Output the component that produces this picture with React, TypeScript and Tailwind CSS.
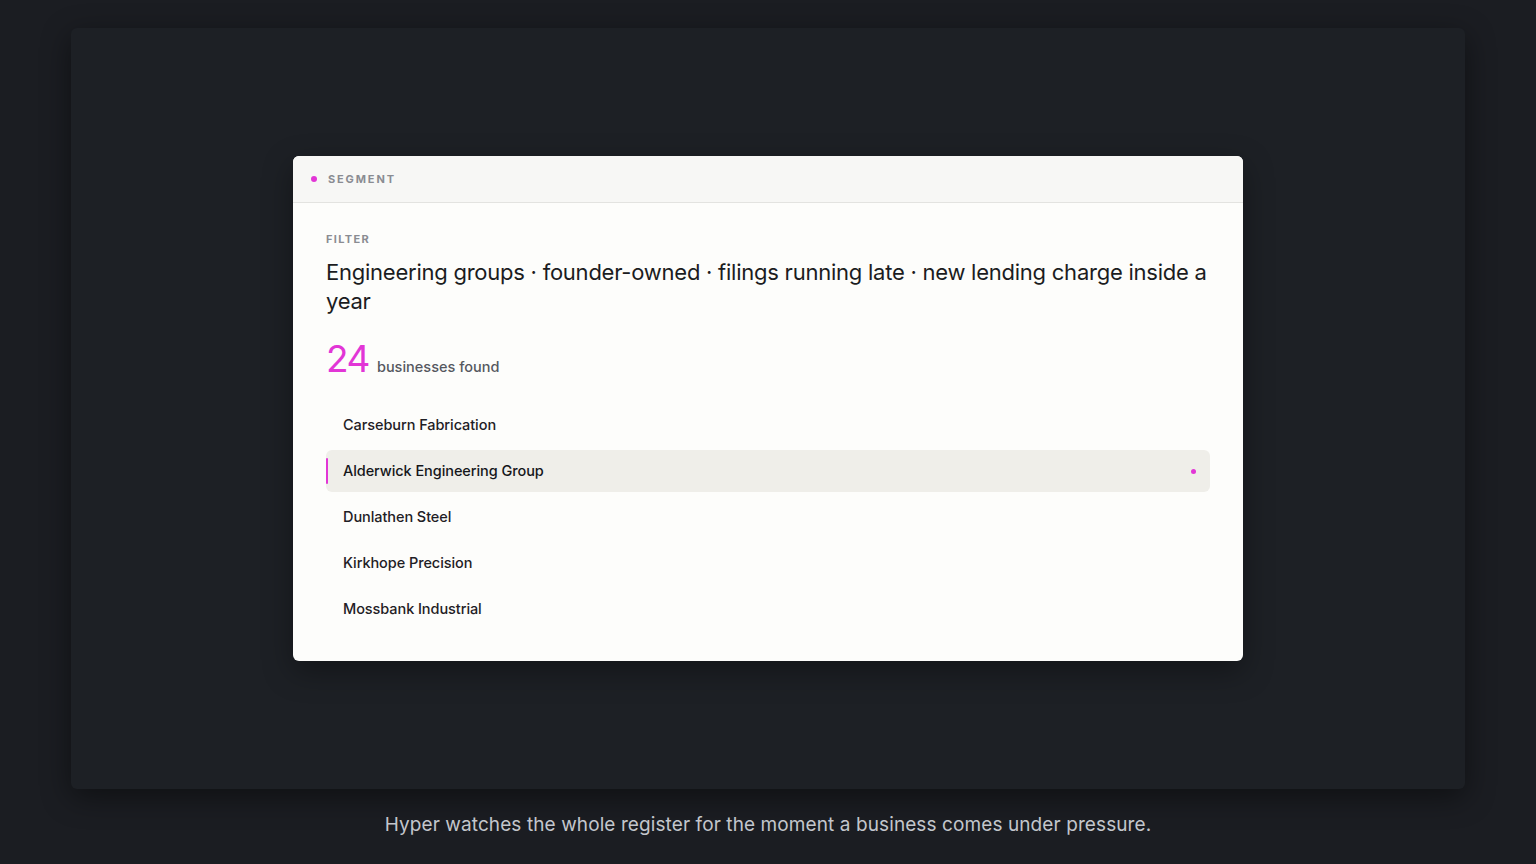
// Segment preview: a filter summary card inside a framed stage, with a caption below.
const companies = [
  "Carseburn Fabrication",
  "Alderwick Engineering Group",
  "Dunlathen Steel",
  "Kirkhope Precision",
  "Mossbank Industrial",
];

const ACTIVE = "Alderwick Engineering Group";

function SegmentCard() {
  return (
    <div className="w-[950px] overflow-hidden rounded-md bg-[#fdfdfb] shadow-[0_10px_30px_rgba(0,0,0,0.35)]">
      <div className="flex h-[47px] items-center gap-[11px] border-b border-[#e3e3e0] bg-[#f7f7f5] px-[18px]">
        <span className="h-[6px] w-[6px] rounded-full bg-[#e236d6]" />
        <span className="text-[11px] font-bold tracking-[0.17em] text-[#8a8c92]">
          SEGMENT
        </span>
      </div>
      <div className="px-[33px] pt-[28px] pb-[31px]">
        <div className="text-[11px] font-bold tracking-[0.12em] text-[#8a8c92]">
          FILTER
        </div>
        <h2 className="mt-[11px] text-[22px] leading-[29px] font-normal tracking-[-0.011em] text-[#1b1c21]">
          Engineering groups · founder-owned · filings running late · new lending charge inside a year
        </h2>
        <div className="mt-[24px] flex items-baseline gap-[8px]">
          <span className="text-[37px] leading-none font-normal tracking-[-0.04em] text-[#e236d6]">
            24
          </span>
          <span className="text-[14.5px] font-medium text-[#55585f]">businesses found</span>
        </div>
        <ul className="mt-[26px] flex flex-col gap-[4px]">
          {companies.map((name) => {
            const active = name === ACTIVE;
            return (
              <li
                key={name}
                className={`relative flex h-[42px] items-center rounded-md pr-[14px] pl-[17px] ${
                  active ? "bg-[#efeee9]" : ""
                }`}
              >
                {active && (
                  <span className="absolute top-[8px] bottom-[8px] left-0 w-[2px] rounded-full bg-[#e236d6]" />
                )}
                <span
                  className={`flex-1 text-[14.5px] font-medium tracking-[-0.005em] ${
                    active ? "text-[#15161a]" : "text-[#1f2025]"
                  }`}
                >
                  {name}
                </span>
                {active && <span className="h-[5px] w-[5px] rounded-full bg-[#e236d6]" />}
              </li>
            );
          })}
        </ul>
      </div>
    </div>
  );
}

export default function App() {
  return (
    <div
      className="flex min-h-[864px] flex-col items-center bg-[#1b1d22] px-[71px] pt-[28px]"
      style={{ fontFamily: "Inter, 'Noto Sans', sans-serif" }}
    >
      <div className="flex h-[761px] w-full items-center justify-center rounded-md bg-[#1d2025] shadow-[0_8px_30px_rgba(0,0,0,0.45)]">
        <SegmentCard />
      </div>
      <p className="mt-[22px] text-[19px] tracking-[0.005em] text-[#c3c6cc]">
        Hyper watches the whole register for the moment a business comes under pressure.
      </p>
    </div>
  );
}
